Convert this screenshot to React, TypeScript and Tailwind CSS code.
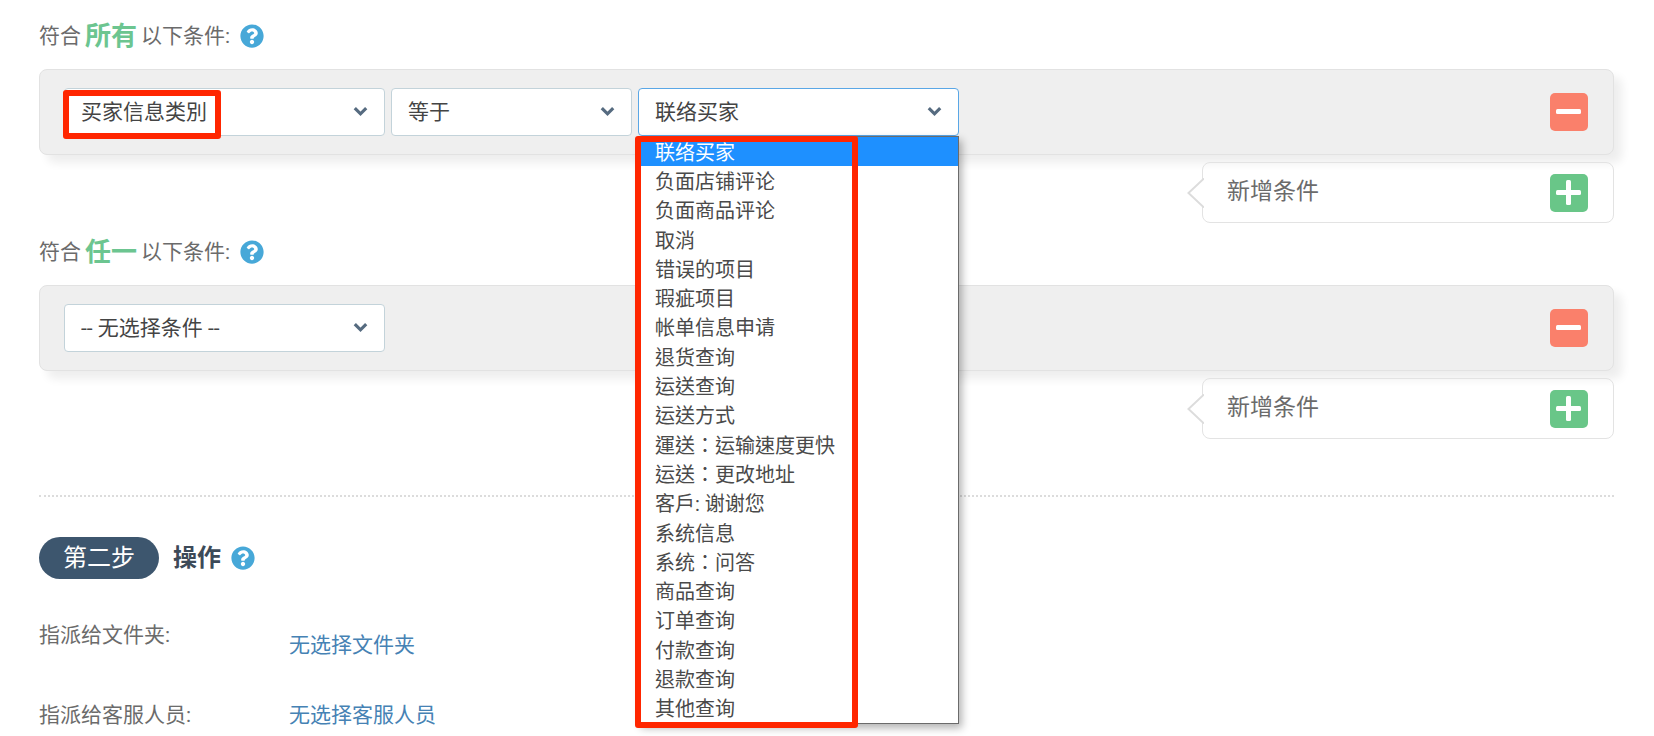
import React from "react";
import { FaQuestionCircle } from "react-icons/fa";

const categories = [
    "联络买家",
    "负面店铺评论",
    "负面商品评论",
    "取消",
    "错误的项目",
    "瑕疵项目",
    "帐单信息申请",
    "退货查询",
    "运送查询",
    "运送方式",
    "運送：运输速度更快",
    "运送：更改地址",
    "客戶: 谢谢您",
    "系统信息",
    "系统：问答",
    "商品查询",
    "订单查询",
    "付款查询",
    "退款查询",
    "其他查询",
];

const HelpButton = () => (
    <button type="button" aria-label="help" className="cursor-pointer text-[#47a8d8]">
        <FaQuestionCircle size={24} />
    </button>
);

/*
    props.label
    props.options
    props.width
    props.active
    props.children (anything that lies over the select)
*/
const SelectBox = (props: any) => {
    return (
        <div className={`relative ${props.width}`}>
            <select
                aria-label={props.label}
                className={`block w-full h-12 appearance-none rounded-[4px] border bg-white pl-4 pr-10 text-[21px] leading-7 text-[#444] outline-none ${props.active ? "border-[#5aa7e6]" : "border-[#c3d3da]"}`}
            >
                {props.options.map((item: string) => (
                    <option key={item}>{item}</option>
                ))}
            </select>
            <svg className="pointer-events-none absolute right-[17px] top-[18px]" width="15" height="11" viewBox="0 0 15 11" fill="none">
                <path d="M1.8 2.2 L7.5 7.8 L13.2 2.2" stroke="#566b80" strokeWidth="3.2" />
            </svg>
            {props.children}
        </div>
    );
};

const Heading = (props: any) => (
    <h2 className="flex h-[42px] items-center text-[21px] leading-8 text-[#6b6b6b]">
        <span>符合</span>
        <strong className="mx-1 text-[26px] text-[#6cc590]">{props.emphasis}</strong>
        <span className="mr-[10px]">以下条件:</span>
        <HelpButton />
    </h2>
);

const ConditionPanel = (props: any) => (
    <div className="mt-3 flex items-center justify-between rounded-lg border border-[#e2e2e2] bg-[#efefef] py-[18px] pl-6 pr-[25px] shadow-[8px_8px_10px_rgba(0,0,0,0.07)]">
        <div className="flex gap-[6px]">{props.children}</div>
        <button type="button" aria-label="remove" className="flex size-[38px] cursor-pointer items-center justify-center rounded-[5px] bg-[#fa806b]">
            <svg width="38" height="38" viewBox="0 0 38 38">
                <rect x="6" y="16" width="25" height="5" rx="1.5" fill="#fff" />
            </svg>
        </button>
    </div>
);

const AddCondition = () => (
    <div className="relative ml-auto mt-[7px] flex h-[61px] w-[412px] items-center justify-between rounded-lg border border-[#e3e3e3] pl-6 pr-[25px]">
        {/* Pointer on the left edge */}
        <svg className="absolute -left-4 top-[15px]" width="17" height="30" viewBox="0 0 17 30">
            <path d="M17 0.5 L1.5 15 L17 29.5" fill="#fff" stroke="#dcdcdc" strokeWidth="2" />
        </svg>
        <span className="pb-px text-[23px] leading-8 text-[#6b6b6b]">新增条件</span>
        <button type="button" aria-label="add" className="flex size-[38px] cursor-pointer items-center justify-center rounded-[5px] bg-[#69c688]">
            <svg width="38" height="38" viewBox="0 0 38 38">
                <rect x="6" y="16" width="25" height="5" rx="1.5" fill="#fff" />
                <rect x="16" y="6" width="5" height="25" rx="1.5" fill="#fff" />
            </svg>
        </button>
    </div>
);

const App = () => {
    const [selected, setSelected] = React.useState(categories[0]);

    return (
        <main className="min-h-screen bg-white pl-[39px] pr-10 pt-[15px] font-[Roboto,'Noto_Sans_CJK_SC',sans-serif]">
            <section>
                <Heading emphasis="所有" />
                <ConditionPanel>
                    <SelectBox label="条件" width="w-[321px]" options={["买家信息类別"]}>
                        <div className="pointer-events-none absolute -left-px top-[2px] h-[49px] w-[158px] rounded-[3px] border-6 border-[#ff2600]" />
                    </SelectBox>
                    <SelectBox label="运算" width="w-[241px]" options={["等于"]} />
                    <SelectBox label="类別" width="w-[321px]" options={categories} active>
                        {/* Open list */}
                        <ul
                            role="listbox"
                            className="absolute left-0 top-full z-10 flex h-[588px] w-full flex-col border border-[#6b6b6b] bg-white font-[Roboto,'Noto_Sans_CJK_TC',sans-serif] text-[20px] leading-6 text-[#4a4a4a] shadow-[3px_4px_8px_rgba(0,0,0,0.3)]"
                        >
                            {categories.map((item) => (
                                <li
                                    key={item}
                                    role="option"
                                    aria-selected={item === selected}
                                    onClick={() => setSelected(item)}
                                    className={`flex flex-1 items-center pl-4 pt-[2px] ${item === selected ? "bg-[#1e90ff] text-white" : ""}`}
                                >
                                    {item}
                                </li>
                            ))}
                        </ul>
                        <div className="pointer-events-none absolute -left-[3px] top-12 z-20 h-[592px] w-[223px] rounded-[3px] border-6 border-[#ff2600]" />
                    </SelectBox>
                </ConditionPanel>
                <AddCondition />
            </section>

            <section className="mt-2">
                <Heading emphasis="任一" />
                <ConditionPanel>
                    <SelectBox label="条件" width="w-[321px]" options={["-- 无选择条件 --"]} />
                </ConditionPanel>
                <AddCondition />
            </section>

            <section className="mt-14 border-t-2 border-dotted border-[#dcdcdc] pt-10">
                <h2 className="flex items-center text-[24px] leading-[42px]">
                    <span className="rounded-full bg-[#3d566e] px-6 text-white">第二步</span>
                    <strong className="ml-[14px] mr-[10px] text-[#3c4a58]">操作</strong>
                    <HelpButton />
                </h2>
                <dl className="mt-[41px] text-[21px] leading-[30px]">
                    <div className="flex">
                        <dt className="w-[250px] text-[#6b6b6b]">指派给文件夹:</dt>
                        <dd className="pt-[10px]">
                            <a href="#folder" className="text-[#4682b4]">无选择文件夹</a>
                        </dd>
                    </div>
                    <div className="mt-10 flex">
                        <dt className="w-[250px] text-[#6b6b6b]">指派给客服人员:</dt>
                        <dd>
                            <a href="#agent" className="text-[#4682b4]">无选择客服人员</a>
                        </dd>
                    </div>
                </dl>
            </section>
        </main>
    );
};

export default App;
